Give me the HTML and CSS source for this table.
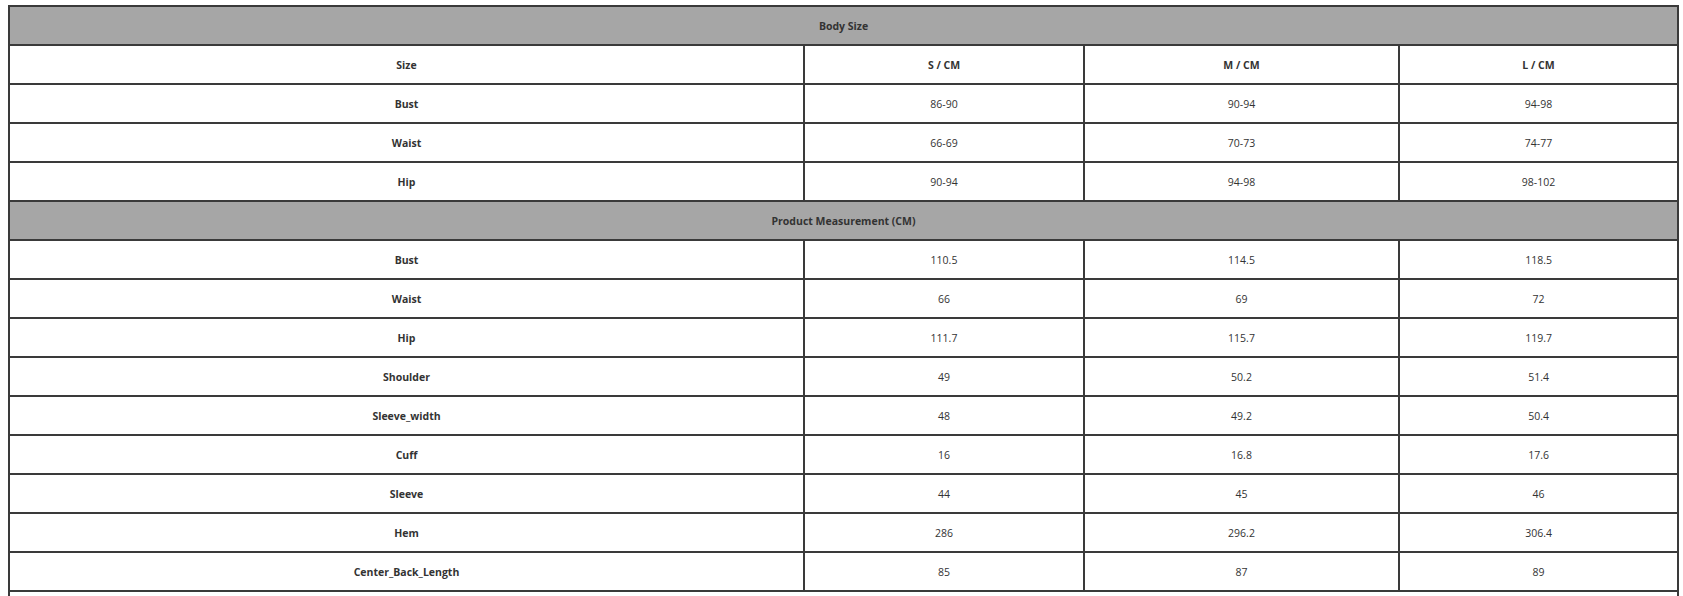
FILE: index.html
```html
<!DOCTYPE html>
<html>
<head>
<meta charset="utf-8">
<link rel="stylesheet" href="styles.css">
</head>
<body>
<table class="size-table">
  <colgroup>
    <col class="c1"><col class="c2"><col class="c3"><col class="c4">
  </colgroup>
  <tr class="section"><td colspan="4">Body Size</td></tr>
  <tr class="bold"><td>Size</td><td>S / CM</td><td>M / CM</td><td>L / CM</td></tr>
  <tr><td class="lbl">Bust</td><td>86-90</td><td>90-94</td><td>94-98</td></tr>
  <tr><td class="lbl">Waist</td><td>66-69</td><td>70-73</td><td>74-77</td></tr>
  <tr><td class="lbl">Hip</td><td>90-94</td><td>94-98</td><td>98-102</td></tr>
  <tr class="section"><td colspan="4">Product Measurement (CM)</td></tr>
  <tr><td class="lbl">Bust</td><td>110.5</td><td>114.5</td><td>118.5</td></tr>
  <tr><td class="lbl">Waist</td><td>66</td><td>69</td><td>72</td></tr>
  <tr><td class="lbl">Hip</td><td>111.7</td><td>115.7</td><td>119.7</td></tr>
  <tr><td class="lbl">Shoulder</td><td>49</td><td>50.2</td><td>51.4</td></tr>
  <tr><td class="lbl">Sleeve_width</td><td>48</td><td>49.2</td><td>50.4</td></tr>
  <tr><td class="lbl">Cuff</td><td>16</td><td>16.8</td><td>17.6</td></tr>
  <tr><td class="lbl">Sleeve</td><td>44</td><td>45</td><td>46</td></tr>
  <tr><td class="lbl">Hem</td><td>286</td><td>296.2</td><td>306.4</td></tr>
  <tr><td class="lbl">Center_Back_Length</td><td>85</td><td>87</td><td>89</td></tr>
  <tr class="note"><td colspan="4">&nbsp;</td></tr>
</table>
</body>
</html>
```
FILE: styles.css
```css
html, body {
  margin: 0;
  padding: 0;
  background: #ffffff;
}
body {
  padding: 5px 0 0 8px;
  font-family: "Open Sans", "Liberation Sans", sans-serif;
  font-size: 10.5px;
  color: #333333;
}
.size-table {
  border-collapse: collapse;
  table-layout: fixed;
  width: 1669px;
  border: 2px solid #444444;
}
.c1 { width: 795px; }
.c2 { width: 280px; }
.c3 { width: 315px; }
.c4 { width: 279px; }
.size-table td {
  border: 2px solid #3a3a3a;
  height: 39px;
  padding: 0;
  text-align: center;
  vertical-align: middle;
  box-sizing: border-box;
}
.size-table .section td {
  background: #a6a6a6;
  font-weight: 700;
}
.size-table .bold td,
.size-table td.lbl {
  font-weight: 700;
}
```
